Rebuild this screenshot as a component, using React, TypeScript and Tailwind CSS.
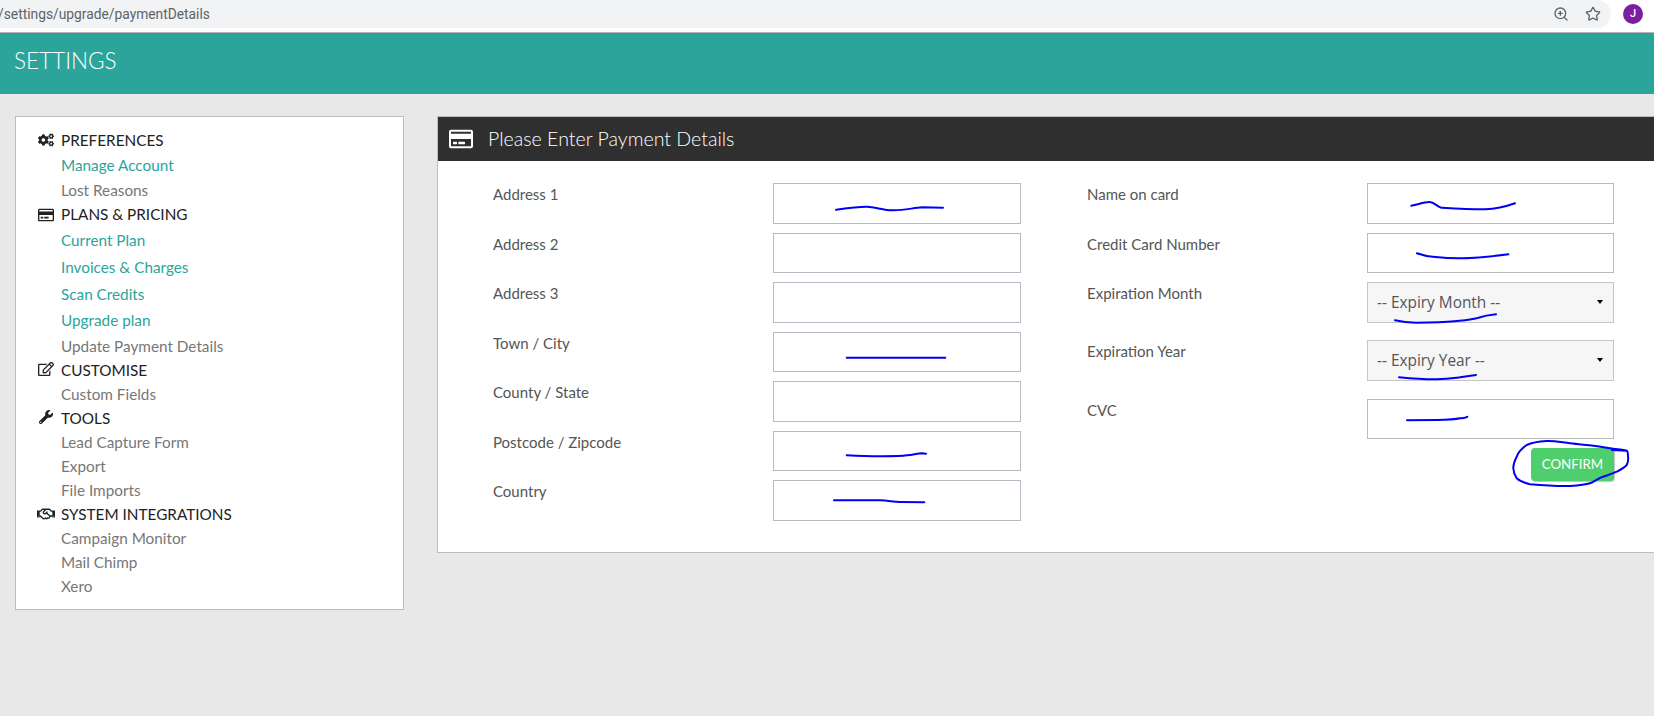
import React from 'react';
import { ZoomIn, Star } from 'lucide-react';
import { FaCogs, FaRegCreditCard, FaRegEdit, FaWrench, FaRegHandshake } from 'react-icons/fa';

type NavRow = {
  label: string;
  height: string;
  kind: 'heading' | 'link' | 'muted';
  icon?: React.ReactNode;
};

const navRows: NavRow[] = [
  { label: 'PREFERENCES', height: 'h-[24px]', kind: 'heading', icon: <FaCogs className="h-[16px] w-[16px]" /> },
  { label: 'Manage Account', height: 'h-[26px]', kind: 'link' },
  { label: 'Lost Reasons', height: 'h-[24px]', kind: 'muted' },
  { label: 'PLANS & PRICING', height: 'h-[25px]', kind: 'heading', icon: <FaRegCreditCard className="h-[16px] w-[16px]" /> },
  { label: 'Current Plan', height: 'h-[26px]', kind: 'link' },
  { label: 'Invoices & Charges', height: 'h-[28px]', kind: 'link' },
  { label: 'Scan Credits', height: 'h-[26px]', kind: 'link' },
  { label: 'Upgrade plan', height: 'h-[27px]', kind: 'link' },
  { label: 'Update Payment Details', height: 'h-[24px]', kind: 'muted' },
  { label: 'CUSTOMISE', height: 'h-[24px]', kind: 'heading', icon: <FaRegEdit className="-mt-[2px] h-[16px] w-[16px]" /> },
  { label: 'Custom Fields', height: 'h-[24px]', kind: 'muted' },
  { label: 'TOOLS', height: 'h-[24px]', kind: 'heading', icon: <FaWrench className="-mt-[2px] h-[14px] w-[14px]" /> },
  { label: 'Lead Capture Form', height: 'h-[24px]', kind: 'muted' },
  { label: 'Export', height: 'h-[24px]', kind: 'muted' },
  { label: 'File Imports', height: 'h-[24px]', kind: 'muted' },
  { label: 'SYSTEM INTEGRATIONS', height: 'h-[24px]', kind: 'heading', icon: <FaRegHandshake className="-mt-[1px] h-[20px] w-[20px]" /> },
  { label: 'Campaign Monitor', height: 'h-[24px]', kind: 'muted' },
  { label: 'Mail Chimp', height: 'h-[24px]', kind: 'muted' },
  { label: 'Xero', height: 'h-[24px]', kind: 'muted' },
];

const addressFields = ['Address 1', 'Address 2', 'Address 3', 'Town / City', 'County / State', 'Postcode / Zipcode', 'Country'];

// the hand drawn pen marks, in page coordinates
const scribbles = [
  'M836 209.7 C848 208 858 206.5 867 206.7 C875 206.8 884 210.5 893 210.3 C903 210.5 913 208 922 207.3 L943 207.7',
  'M846.7 357.7 L945.3 357.7',
  'M846.7 455.3 C860 456 872 456.5 883 456.3 C895 456.2 902 456 907 455.3 C914 454.5 918 453.3 922 453.3 L926 453.7',
  'M834 500.3 L880 500.3 C888 500.5 893 501.8 900 502 L924.3 502.3',
  'M1411.3 205.7 C1418 204.5 1424 202 1429.4 202 C1434 202 1436 205.5 1441 207.7 C1455 208.5 1472 209.5 1485.3 209.3 C1494 209 1506 206.5 1515 203.3',
  'M1417 253.3 C1424 256 1430 256.7 1435.2 257 C1445 258 1454 258.5 1462 258.3 C1475 258.3 1495 256 1508.4 254.3',
  'M1395 320.3 C1402 322 1410 322.7 1416 322.7 C1430 322.7 1444 322.5 1454.5 321.3 C1464 320.3 1470 320 1477.6 318 C1482 316.5 1488 315 1496 314.3',
  'M1399 377.3 C1412 378.5 1425 379.5 1436.7 379.3 C1448 379 1454 378 1460 377.3 L1476 375',
  'M1407 420.3 L1436.7 420 C1448 419.8 1455 419.5 1460 418.3 C1463 418 1466 418 1467.3 416.7',
  'M1626.7 450.7 C1622 449 1616 449.5 1610 448.3 C1597 445.5 1584 445 1570 443.3 C1560 442 1553 440.5 1546.7 441 C1538 441.5 1531 443 1526.7 445 C1521 449 1518 452 1516.7 456.7 C1514.5 461 1513.3 464 1513.3 468.3 C1513.5 472 1514.5 475 1516.7 478.3 C1520 481.5 1525 483 1530 484.3 C1544 485.5 1558 486.3 1570 486 C1578 485.5 1585 485 1590 483.3 C1595 481.5 1598 478 1603 476.7 C1608 475 1612 474 1616.7 471.7 C1620 470 1624 468 1626.7 465 C1628 462 1628.5 459 1628 456.7 C1628 454 1628 451.5 1626.7 450.7 L1612 450',
];

const ExpirySelect = ({ text }: { text: string }) => (
  <div className="flex h-[40.5px] w-[247px] items-center justify-between border border-[#c6c6c8] bg-[#f6f6f6] pl-[9px] pr-[10px] font-['Open_Sans',sans-serif] text-[15.4px] text-[#555]">
    <span>{text}</span>
    <span className="h-0 w-0 border-x-[3.5px] border-t-[4px] border-x-transparent border-t-black" />
  </div>
);

const FieldRow = ({ label, children, className }: { label: string; children: React.ReactNode; className?: string }) => (
  <div className={`flex items-start justify-between ${className ?? ''}`}>
    <label className="pt-[1px] text-[15px] leading-[20px] text-[#555]">{label}</label>
    {children}
  </div>
);

const App = () => {
  return (
    <div className="relative h-[716px] overflow-hidden bg-[#e8e8e8] font-['Lato',sans-serif]">
      {/* browser chrome */}
      <div className="h-[33px] border-b border-[#b4b4b4] bg-white">
        <div className="flex h-[28px] w-[1611px] items-center justify-between rounded-r-[14px] bg-[#f1f3f4] pr-[10px]">
          <span className="ml-[-2px] font-['Roboto',sans-serif] text-[13.8px] text-[#5f6368]">/settings/upgrade/paymentDetails</span>
          <div className="flex items-center gap-[16px] text-[#5f6368]">
            <ZoomIn className="h-[16px] w-[16px]" strokeWidth={2} />
            <Star className="h-[16px] w-[16px]" strokeWidth={2} />
          </div>
        </div>
      </div>
      <div className="pointer-events-none absolute right-[11px] top-[4px] flex h-[20px] w-[20px] items-center justify-center rounded-full bg-[#7b1fa2] font-['Roboto',sans-serif] text-[11px] font-medium text-white">
        J
      </div>

      <header className="flex h-[61px] items-center bg-[#2ba59c] pb-[5px] pl-[14px] text-[22.5px] font-light text-white">SETTINGS</header>

      <div className="flex items-start gap-[33px] pl-[15px] pt-[22px]">
        <aside className="w-[389px] border border-[#bcbcc2] bg-white pb-[11px] pt-[11px] text-[15.3px]">
          {navRows.map(row => (
            <div key={row.label} className={`relative flex items-center pl-[45px] ${row.height}`}>
              {row.icon && (
                <span className="absolute left-[21px] flex w-[18px] items-center justify-center text-[#222]">{row.icon}</span>
              )}
              <span
                className={
                  row.kind === 'heading'
                    ? 'text-[#222]'
                    : row.kind === 'link'
                    ? 'text-[#2ba59c]'
                    : 'text-[#777]'
                }
              >
                {row.label}
              </span>
            </div>
          ))}
        </aside>

        <section className="flex-1 border-y border-l border-[#bcbcc2] bg-white">
          <div className="flex h-[44px] items-center gap-[15px] bg-[#2f2f2f] pl-[11px] text-[19.6px] font-light text-white">
            <FaRegCreditCard className="h-[24px] w-[24px]" />
            <span>Please Enter Payment Details</span>
          </div>
          <div className="flex gap-[66px] pb-[31px] pl-[55px] pt-[22px]">
            <div className="flex w-[528px] flex-col gap-[9px]">
              {addressFields.map(field => (
                <FieldRow key={field} label={field}>
                  <input className="h-[40.5px] w-[248px] border border-[#b9b9c1] bg-white" />
                </FieldRow>
              ))}
            </div>
            <div className="flex w-[527px] flex-col">
              <FieldRow label="Name on card" className="mb-[9px]">
                <input className="h-[40.5px] w-[247px] border border-[#b9b9c1] bg-white" />
              </FieldRow>
              <FieldRow label="Credit Card Number" className="mb-[9px]">
                <input className="h-[40.5px] w-[247px] border border-[#b9b9c1] bg-white" />
              </FieldRow>
              <FieldRow label="Expiration Month" className="mb-[17.5px]">
                <ExpirySelect text="-- Expiry Month --" />
              </FieldRow>
              <FieldRow label="Expiration Year" className="mb-[18px]">
                <ExpirySelect text="-- Expiry Year --" />
              </FieldRow>
              <FieldRow label="CVC" className="mb-[9px]">
                <input className="h-[40.5px] w-[247px] border border-[#b9b9c1] bg-white" />
              </FieldRow>
              <div className="flex justify-end">
                <button className="h-[33px] w-[83px] rounded-[4px] bg-[#4fce6d] text-[13.3px] text-white shadow-[1px_1px_1px_#c4c4c4]">
                  CONFIRM
                </button>
              </div>
            </div>
          </div>
        </section>
      </div>

      <svg className="pointer-events-none absolute left-0 top-0" width="1654" height="716" fill="none" stroke="#0000f5" strokeWidth="2" strokeLinecap="round" strokeLinejoin="round">
        {scribbles.map(d => (
          <path key={d} d={d} />
        ))}
      </svg>
    </div>
  );
};

export default App;
